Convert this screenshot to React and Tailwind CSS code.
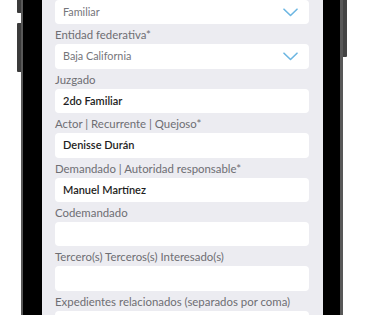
import React from 'react';

const fields = [
  { label: null, value: 'Familiar', select: true },
  { label: 'Entidad federativa*', value: 'Baja California', select: true },
  { label: 'Juzgado', value: '2do Familiar' },
  { label: 'Actor | Recurrente | Quejoso*', value: 'Denisse Durán' },
  { label: 'Demandado | Autoridad responsable*', value: 'Manuel Martínez' },
  { label: 'Codemandado', value: '' },
  { label: 'Tercero(s) Terceros(s) Interesado(s)', value: '' },
  { label: 'Expedientes relacionados (separados por coma)', value: '' },
];

function Chevron() {
  return (
    <svg width="15" height="9" viewBox="0 0 15 9" fill="none" className="mr-[11px]">
      <path d="M1 1.2 L7.5 7.5 L14 1.2" stroke="#6cb6e2" strokeWidth="1.6" strokeLinecap="round" strokeLinejoin="round" />
    </svg>
  );
}

function Field({ label, value, select }) {
  return (
    <div className="flex flex-col">
      {label && (
        <div className="h-[20px] flex items-center pt-[1px] whitespace-nowrap text-[11.4px] text-[#6e6e73]">{label}</div>
      )}
      <div className="h-[24.4px] bg-white rounded-[4px] flex items-center justify-between pl-[8px]">
        <span className={select ? 'text-[10.8px] text-[#75757a]' : 'text-[11px] font-semibold text-[#1e1e22]'}>{value}</span>
        {select && <Chevron />}
      </div>
    </div>
  );
}

export default function App() {
  return (
    <div className="flex w-[375px] h-[315px] overflow-hidden bg-white pl-[17px]" style={{ fontFamily: 'Lato, "Open Sans", sans-serif' }}>
      <div className="flex flex-col w-[4px]">
        <div className="h-[13px] bg-[#3b3b3b] rounded-bl-[1px]" />
        <div className="h-[10px]" />
        <div className="h-[49px] bg-[#3b3b3b] rounded-l-[1px]" />
      </div>
      <div className="flex h-full border-l-[2px] border-r-[3px] border-[#585858] bg-black">
        <div className="w-[19px]" />
        <div className="w-[281px] h-full bg-[#ececf1] pl-[13px] pr-[14px]">
          <div className="flex flex-col">
            {fields.map((f, i) => (
              <Field key={i} {...f} />
            ))}
          </div>
        </div>
        <div className="w-[17px]" />
      </div>
      <div className="flex flex-col w-[4px]">
        <div className="h-[57px] bg-[#444] rounded-br-[1px]" />
      </div>
    </div>
  );
}
